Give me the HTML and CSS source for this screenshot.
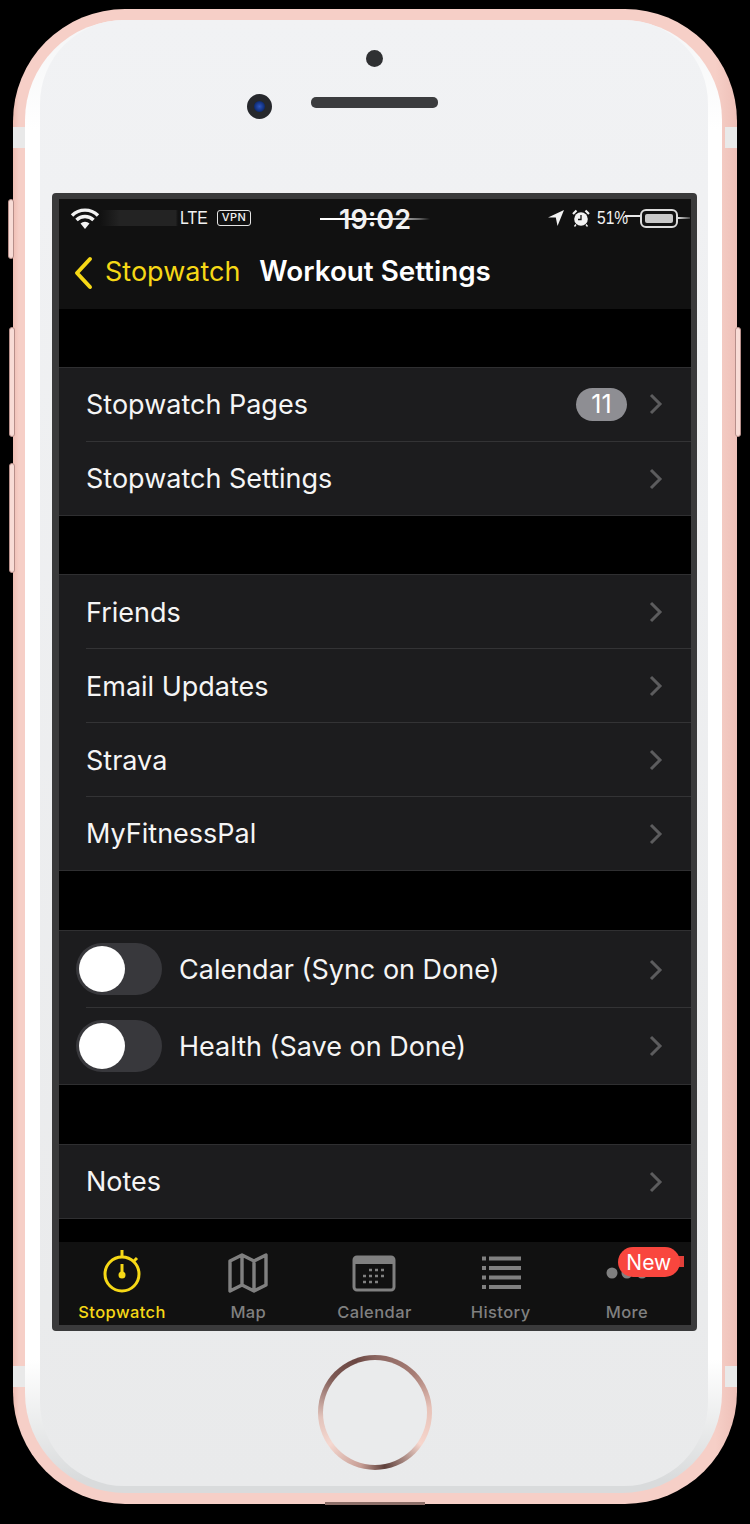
FILE: index.html
```html
<!DOCTYPE html>
<html>
  <head>
    <meta charset="UTF-8">
    <title>Workout Settings</title>
    <link rel="stylesheet" href="styles.css">
  </head>
  <body>
    <div class="phone">
      <div class="side-btn btn-mute"></div>
      <div class="side-btn btn-up"></div>
      <div class="side-btn btn-down"></div>
      <div class="side-btn btn-power"></div>
      <div class="band band-tl"></div>
      <div class="band band-tr"></div>
      <div class="band band-bl"></div>
      <div class="band band-br"></div>
      <div class="port"></div>

      <div class="bezel">
        <div class="face">
          <div class="top">
            <div class="sensor"></div>
            <div class="ear-row">
              <div class="camera"></div>
              <div class="speaker"></div>
            </div>
          </div>

          <div class="screen">
            <div class="status">
              <div class="status-left">
                <svg class="wifi" width="30" height="23" viewBox="0 0 30 23">
                  <path d="M2 8.500a18.500 18.500 0 0 1 26 0M6.500 13a12 12 0 0 1 17 0" fill="none" stroke="#f2f2f2" stroke-width="3.400"/>
                  <path d="M10.500 16.500a6.500 6.500 0 0 1 9 0L15 22z" fill="#f2f2f2"/>
                </svg>
                <div class="carrier"></div>
                <span class="lte">LTE</span>
                <span class="vpn">VPN</span>
              </div>
              <div class="time">19:02</div>
              <div class="status-right">
                <svg class="arrow" width="16" height="16" viewBox="0 0 16 16">
                  <path d="M16 0 0 7.500h7.800L9.500 16z" fill="#f2f2f2"/>
                </svg>
                <svg class="alarm" width="18" height="18" viewBox="0 0 18 18">
                  <circle cx="9" cy="10" r="6.800" fill="#f2f2f2"/>
                  <path d="M9 6v4.500H6" fill="none" stroke="#111" stroke-width="1.300"/>
                  <path d="M1 5 4.500 1.500M17 5l-3.500-3.500" stroke="#f2f2f2" stroke-width="2.200"/>
                  <path d="M4 15.500 2.500 17.500M14 15.500l1.500 2" stroke="#f2f2f2" stroke-width="1.400"/>
                </svg>
                <span class="percent">51%</span>
                <div class="battery"><div class="battery-fill"></div></div>
                <div class="battery-cap"></div>
              </div>
            </div>
            <div class="nav">
              <svg class="back" width="20" height="34" viewBox="0 0 20 34">
                <path d="M17 3 4 17l13 14" fill="none" stroke="#f6d816" stroke-width="4" stroke-linecap="round" stroke-linejoin="round"/>
              </svg>
              <span class="back-label">Stopwatch</span>
              <span class="title">Workout Settings</span>
            </div>

            <div class="list">
              <div class="group">
                <div class="row">
                  <span class="label">Stopwatch Pages</span>
                  <span class="badge">11</span>
                  <svg class="chev" width="14" height="22" viewBox="0 0 14 22"><path d="M2 2l9 9-9 9"/></svg>
                </div>
                <div class="row">
                  <span class="label">Stopwatch Settings</span>
                  <svg class="chev" width="14" height="22" viewBox="0 0 14 22"><path d="M2 2l9 9-9 9"/></svg>
                </div>
              </div>

              <div class="group">
                <div class="row">
                  <span class="label">Friends</span>
                  <svg class="chev" width="14" height="22" viewBox="0 0 14 22"><path d="M2 2l9 9-9 9"/></svg>
                </div>
                <div class="row">
                  <span class="label">Email Updates</span>
                  <svg class="chev" width="14" height="22" viewBox="0 0 14 22"><path d="M2 2l9 9-9 9"/></svg>
                </div>
                <div class="row">
                  <span class="label">Strava</span>
                  <svg class="chev" width="14" height="22" viewBox="0 0 14 22"><path d="M2 2l9 9-9 9"/></svg>
                </div>
                <div class="row">
                  <span class="label">MyFitnessPal</span>
                  <svg class="chev" width="14" height="22" viewBox="0 0 14 22"><path d="M2 2l9 9-9 9"/></svg>
                </div>
              </div>

              <div class="group">
                <div class="row row-toggle">
                  <div class="toggle"><div class="knob"></div></div>
                  <span class="label">Calendar (Sync on Done)</span>
                  <svg class="chev" width="14" height="22" viewBox="0 0 14 22"><path d="M2 2l9 9-9 9"/></svg>
                </div>
                <div class="row row-toggle">
                  <div class="toggle"><div class="knob"></div></div>
                  <span class="label">Health (Save on Done)</span>
                  <svg class="chev" width="14" height="22" viewBox="0 0 14 22"><path d="M2 2l9 9-9 9"/></svg>
                </div>
              </div>

              <div class="group">
                <div class="row">
                  <span class="label">Notes</span>
                  <svg class="chev" width="14" height="22" viewBox="0 0 14 22"><path d="M2 2l9 9-9 9"/></svg>
                </div>
              </div>
            </div>

            <div class="tabs">
              <div class="tab tab-on">
                <svg width="42" height="44" viewBox="0 0 42 44">
                  <circle cx="21" cy="24" r="17" fill="none" stroke="#f6d816" stroke-width="3"/>
                  <path d="M21 0v7M33 11l3-3" stroke="#f6d816" stroke-width="3"/>
                  <path d="M21 14v10" stroke="#f6d816" stroke-width="3"/>
                  <circle cx="21" cy="25" r="3.500" fill="#f6d816"/>
                </svg>
                <span>Stopwatch</span>
              </div>
              <div class="tab">
                <svg width="42" height="44" viewBox="0 0 42 44">
                  <path d="M3 11 15 5l12 6 12-6v30l-12 6-12-6-12 6zM15 5v30M27 11v30" fill="none" stroke="#808080" stroke-width="3.400" stroke-linejoin="round"/>
                </svg>
                <span>Map</span>
              </div>
              <div class="tab">
                <svg width="44" height="44" viewBox="0 0 44 44">
                  <rect x="2" y="7" width="40" height="33" rx="3" fill="none" stroke="#808080" stroke-width="3"/>
                  <path d="M2 9a3 3 0 0 1 3-3h34a3 3 0 0 1 3 3v5H2z" fill="#808080"/>
                  <path d="M17 20h3M23 20h3M29 20h3M11 26h3M17 26h3M23 26h3M29 26h3M11 32h3M17 32h3M23 32h3" stroke="#808080" stroke-width="2.600"/>
                </svg>
                <span>Calendar</span>
              </div>
              <div class="tab">
                <svg width="42" height="44" viewBox="0 0 42 44">
                  <path d="M9 8.500h32M9 18h32M9 27.500h32M9 37h32" stroke="#808080" stroke-width="3.800"/>
                  <path d="M2 8.500h4M2 18h4M2 27.500h4M2 37h4" stroke="#808080" stroke-width="3.800"/>
                </svg>
                <span>History</span>
              </div>
              <div class="tab tab-more">
                <svg width="42" height="44" viewBox="0 0 42 44">
                  <circle cx="6" cy="23" r="5.500" fill="#808080"/>
                  <circle cx="21" cy="23" r="5.500" fill="#808080"/>
                  <circle cx="36" cy="23" r="5.500" fill="#808080"/>
                </svg>
                <span>More</span>
                <div class="new-tail"></div>
                <div class="new-badge">New</div>
              </div>
            </div>
          </div>

          <div class="chin">
            <div class="home"><div class="home-in"></div></div>
          </div>
        </div>
      </div>
    </div>
  </body>
</html>
```

FILE: styles.css
```css
html, body
{
  margin:0;
  background-color:black;
}
body
{
  width:750px;
  height:1524px;
  overflow:hidden;
  font-family:Inter, "Liberation Sans", sans-serif;
}
.phone
{
  position:relative;
  box-sizing:border-box;
  width:724px;
  height:1495px;
  margin:9px 0 0 13px;
  padding:11px 15px 11px 12px;
  border-radius:112px;
  background:linear-gradient(90deg, #eebdb3 0, #f6cfc7 6px, #f6cfc7 97%, #eec0b8 100%);
}
.side-btn
{
  position:absolute;
  box-sizing:border-box;
  width:6px;
  border:1px solid #b78f8a;
  border-radius:3px;
  background-color:#f8dcd6;
}
.btn-mute { left:-5px; top:190px; height:60px; }
.btn-up { left:-4px; top:318px; height:110px; }
.btn-down { left:-4px; top:454px; height:110px; }
.btn-power { right:-4px; top:318px; height:110px; }
.band
{
  position:absolute;
  width:12px;
  height:21px;
  background-color:#e9e9e9;
}
.band-tl { left:0; top:118px; }
.band-tr { right:0; top:118px; }
.band-bl { left:0; top:1357px; }
.band-br { right:0; top:1357px; }
.port
{
  position:absolute;
  left:312px;
  bottom:-1px;
  width:100px;
  height:3px;
  background-color:#8d6f69;
}
.bezel
{
  box-sizing:border-box;
  height:100%;
  padding:0 14px 7px 15px;
  border-radius:100px;
  background:linear-gradient(#f4f5f6 0, #ffffff 110px, #ffffff 1340px, #d9dbdc 1460px);
}
.face
{
  display:flex;
  flex-direction:column;
  box-sizing:border-box;
  height:100%;
  padding:0 11px 0 12px;
  border-radius:84px;
  background:linear-gradient(#f1f2f4, #e9eaeb);
}
.top
{
  display:flex;
  flex-direction:column;
  align-items:center;
  box-sizing:border-box;
  height:173px;
  padding-top:30px;
}
.sensor
{
  width:17px;
  height:17px;
  border-radius:50%;
  background-color:#2f3032;
}
.ear-row
{
  display:grid;
  grid-template-columns:1fr 127px 1fr;
  align-items:start;
  width:100%;
  margin-top:27px;
}
.camera
{
  justify-self:end;
  box-sizing:border-box;
  width:25px;
  height:25px;
  margin-right:39px;
  border:7px solid #26282c;
  border-radius:50%;
  background:radial-gradient(circle, #2d55c0 0, #12307a 60%, #0c1a3c 100%);
}
.speaker
{
  height:11px;
  margin-top:3px;
  border-radius:5px;
  background-color:#3b3c3e;
}
.screen
{
  display:flex;
  flex-direction:column;
  box-sizing:border-box;
  height:1138px;
  border:6px solid #3a3a3b;
  border-left-width:7px;
  border-radius:4px;
  background-color:#000;
  overflow:hidden;
}
.status
{
  position:relative;
  display:flex;
  justify-content:space-between;
  align-items:center;
  height:38px;
  background-color:#111;
  color:#f2f2f2;
}
.status-left, .status-right
{
  display:flex;
  align-items:center;
}
.status-left
{
  padding-left:11px;
}
.carrier
{
  width:78px;
  height:16px;
  background:linear-gradient(90deg, #111, #232323 25%, #232323 97%, #111);
}
.lte
{
  display:inline-block;
  width:37px;
  margin-left:2px;
  font-size:18.500px;
  font-family:"Liberation Sans", sans-serif;
  transform:scaleX(.85);
  transform-origin:left center;
}
.vpn
{
  box-sizing:border-box;
  width:34px;
  height:16px;
  border:1.500px solid #e4e4e4;
  border-radius:3px;
  font-size:11px;
  font-weight:500;
  letter-spacing:.5px;
  line-height:13px;
  text-align:center;
}
.time
{
  position:absolute;
  left:261px;
  top:6px;
  width:110px;
  font-size:27px;
  font-weight:600;
  line-height:30px;
  text-align:center;
  background:linear-gradient(90deg, #fff 0, #fff 60%, #666 90%, transparent 100%) 0 13px / 100% 2px no-repeat;
}
.status-right
{
  padding-right:1px;
}
.alarm
{
  margin-left:8px;
}
.percent
{
  display:inline-block;
  width:43px;
  margin-left:7px;
  font-size:19px;
  font-family:"Liberation Sans", sans-serif;
  transform:scaleX(.82);
  transform-origin:left center;
  white-space:nowrap;
}
.battery
{
  position:relative;
  box-sizing:border-box;
  width:38px;
  height:19px;
  padding:3px;
  border:2.500px solid #dcdcdc;
  border-radius:6px;
}
.battery:before
{
  content:"";
  position:absolute;
  left:-17px;
  top:4px;
  width:15px;
  height:2px;
  background-color:#e8e8e8;
}
.battery-fill
{
  height:100%;
  border-radius:2px;
  background-color:#c8c8c8;
}
.battery-cap
{
  width:12px;
  height:2px;
  background:linear-gradient(90deg, #ddd, #444);
}
.nav
{
  display:flex;
  align-items:center;
  box-sizing:border-box;
  height:72px;
  padding:0 0 4px 14px;
  background-color:#111;
  color:#fff;
}
.back
{
  margin-top:4px;
}
.back-label
{
  margin-left:12px;
  color:#f6d816;
  font-size:27px;
}
.title
{
  margin-left:19px;
  font-size:27.800px;
  font-weight:600;
}
.list
{
  flex:1;
  overflow:hidden;
}
.group
{
  margin-top:58px;
  border-top:1px solid #2f2f31;
  border-bottom:1px solid #2f2f31;
  background-color:#1c1c1e;
}
.group:nth-child(n+3)
{
  margin-top:59px;
}
.row
{
  display:flex;
  align-items:center;
  position:relative;
  box-sizing:border-box;
  height:74px;
  padding:0 28px 0 27px;
  color:#f5f5f5;
  font-size:27px;
}
.group:first-child .row:first-child
{
  padding-bottom:2px;
}
.row:last-child
{
  height:73px;
}
.row + .row:before
{
  content:"";
  position:absolute;
  left:27px;
  right:0;
  top:-1px;
  height:1px;
  background-color:#333335;
}
.row-toggle
{
  height:77px;
  padding-left:17px;
}
.row-toggle:last-child
{
  height:76px;
}
.label
{
  flex:1;
}
.badge
{
  width:51px;
  height:33px;
  margin-right:22px;
  border-radius:17px;
  background-color:#8e8e93;
  color:#fff;
  font-size:25px;
  line-height:33px;
  text-align:center;
}
.chev
{
  fill:none;
  stroke:#5c5c5e;
  stroke-width:3;
}
.toggle
{
  box-sizing:border-box;
  width:86px;
  height:52px;
  margin-right:17px;
  padding:3px;
  border-radius:26px;
  background-color:#38383c;
}
.row-toggle:first-child .toggle
{
  margin-bottom:2px;
}
.knob
{
  width:46px;
  height:46px;
  border-radius:50%;
  background-color:#fff;
}
.tabs
{
  display:grid;
  grid-template-columns:repeat(5, 1fr);
  box-sizing:border-box;
  height:83px;
  padding:8px 1px 0 0;
  background-color:#111;
}
.tab
{
  position:relative;
  display:flex;
  flex-direction:column;
  align-items:center;
  color:#808080;
  font-size:16.500px;
  font-weight:500;
  letter-spacing:0.400px;
}
.tab span
{
  margin-top:8px;
}
.tab-on
{
  color:#f6d816;
}
.new-badge
{
  position:absolute;
  left:54px;
  top:-3px;
  width:62px;
  height:30px;
  border-radius:16px;
  background-color:#f9463e;
  color:#fff;
  font-size:21px;
  font-weight:400;
  line-height:31px;
  text-align:center;
  letter-spacing:0;
}
.new-tail
{
  position:absolute;
  left:110px;
  top:6px;
  width:10px;
  height:11px;
  background-color:#e2403a;
}
.chin
{
  flex:1;
  display:flex;
  justify-content:center;
  padding-top:24px;
}
.home
{
  box-sizing:border-box;
  width:114px;
  height:115px;
  padding:5px;
  border-radius:50%;
  background:conic-gradient(#8a6560 0deg, #a67c74 45deg, #e7c2b8 85deg, #f6d6cd 125deg, #5e403b 170deg, #c79e95 195deg, #f5d8d0 235deg, #e2c3bb 265deg, #7c5853 310deg, #6b4742 340deg, #8a6560 360deg);
}
.home-in
{
  height:100%;
  border-radius:50%;
  background-color:#eaebec;
}
```
